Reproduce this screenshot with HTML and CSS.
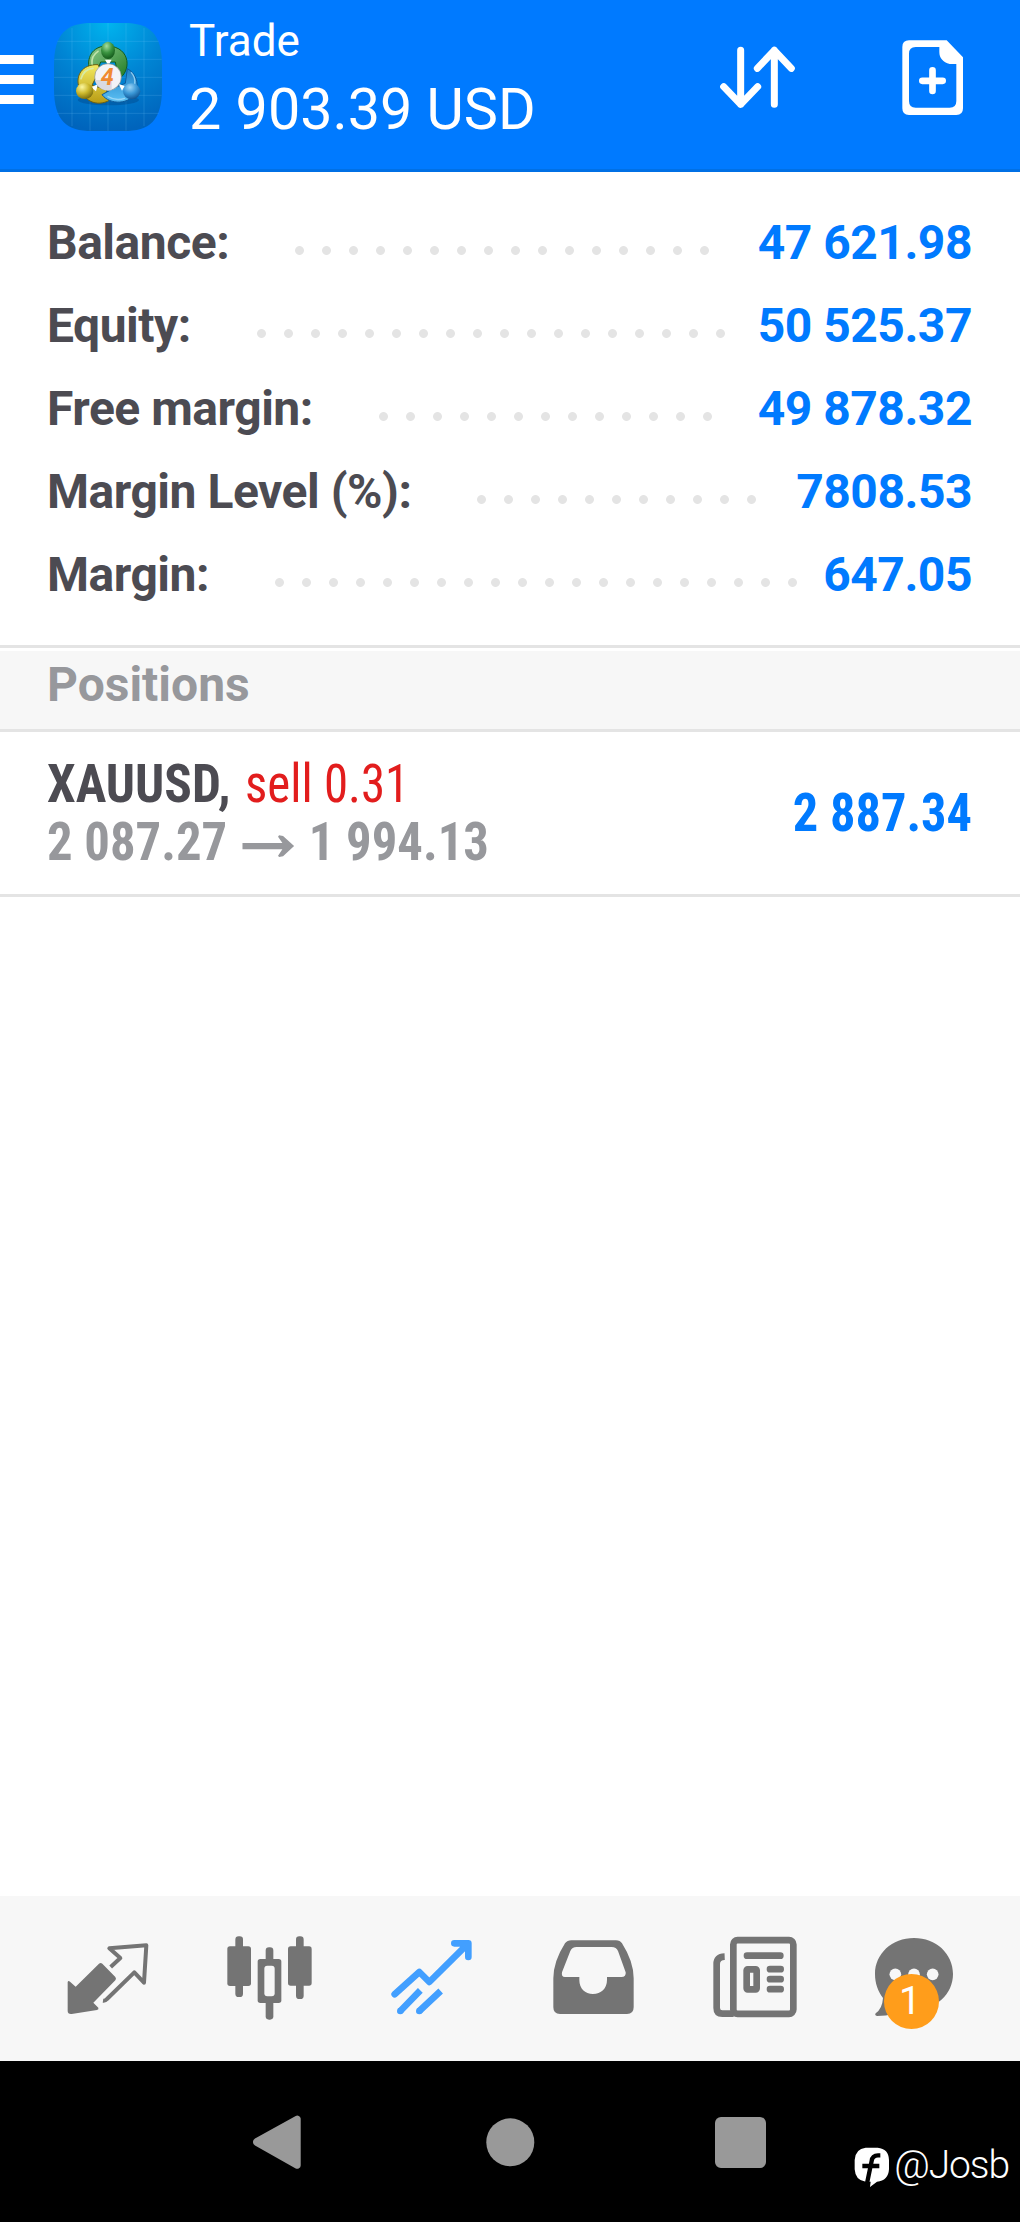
FILE: index.html
```html
<!DOCTYPE html>
<html lang="en">
<head>
<meta charset="utf-8">
<title>Trade</title>
<link rel="stylesheet" href="styles.css">
</head>
<body>
<div class="screen">
  <header class="topbar">
    <svg class="menu" viewBox="0 0 162 516" fill="#fff"><path d="M0 165h101v27H0zM0 225h101v27H0zM0 285h101v27H0z"/></svg>
    <svg class="logo" viewBox="162 69 324 324">
      <defs>
        <radialGradient id="tile" cx=".5" cy="0" r="1"><stop offset="0" stop-color="#00b4ee"/><stop offset=".5" stop-color="#0085d4"/><stop offset="1" stop-color="#0064bc"/></radialGradient>
        <linearGradient id="green" x1="0" y1="0" x2="1" y2="1"><stop offset="0" stop-color="#8ccb8c"/><stop offset="1" stop-color="#1f7a22"/></linearGradient>
        <linearGradient id="yellow" x1="0" y1="0" x2="0" y2="1"><stop offset="0" stop-color="#f3ea62"/><stop offset="1" stop-color="#b99c14"/></linearGradient>
        <linearGradient id="blue" x1="0" y1="0" x2="0" y2="1"><stop offset="0" stop-color="#1f7ec4"/><stop offset="1" stop-color="#5bc0f4"/></linearGradient>
        <radialGradient id="greenBall" cx=".4" cy=".25" r=".8"><stop offset="0" stop-color="#a5dd9f"/><stop offset=".5" stop-color="#3a9440"/><stop offset="1" stop-color="#0f5216"/></radialGradient>
        <radialGradient id="yellowBall" cx=".35" cy=".25" r=".8"><stop offset="0" stop-color="#fbf7a0"/><stop offset=".5" stop-color="#cdb92d"/><stop offset="1" stop-color="#75680c"/></radialGradient>
        <radialGradient id="blueBall" cx=".4" cy=".25" r=".8"><stop offset="0" stop-color="#9bd4f6"/><stop offset=".5" stop-color="#3a97d6"/><stop offset="1" stop-color="#0c4d8c"/></radialGradient>
      </defs>
      <path fill="url(#tile)" d="M162 196C162 100 200 69 276 69h96c76 0 114 31 114 127v70c0 96-38 127-114 127h-96c-76 0-114-31-114-127z"/>
      <path stroke="#7fd0ff" stroke-opacity=".28" stroke-width="2" fill="none" d="M216 84v294M270 70v322M324 69v324M378 70v322M432 84v294M172 124h304M163 178h322M162 232h324M163 286h322M172 340h304"/>
      <ellipse cx="325" cy="300" rx="92" ry="16" fill="#003c7a" opacity=".35"/>
      <path fill="url(#green)" stroke="#155c1a" stroke-width="3" d="M324 138C284 136 258 166 268 208L292 212 302 186H346L356 236C392 218 396 142 324 138z"/>
      <path fill="url(#yellow)" stroke="#6e6010" stroke-width="3" d="M294 194C245 192 226 228 237 262C250 300 288 324 330 300L318 268 276 256 300 206z"/>
      <path fill="url(#blue)" stroke="#0d5a9c" stroke-width="3" d="M382 206C405 218 418 246 408 276C390 314 330 316 306 284L346 262 376 250z"/>
      <path fill="#fff" d="M315 179h20l-7 12h-6zM274 262l20-10-6 22zM356 252l18 6-8 14z"/>
      <path fill="none" stroke="#d5efb9" stroke-width="5" stroke-linecap="round" opacity=".8" d="M276 192q-3-24 18-38M243 236q9-29 36-31"/>
      <path fill="none" stroke="#a7dcf8" stroke-width="4" stroke-linecap="round" opacity=".8" d="M394 218q13 14 10 34M324 290q24 14 50 5"/>
      <ellipse cx="324" cy="151" rx="21" ry="26" fill="url(#greenBall)"/>
      <ellipse cx="254" cy="273" rx="26" ry="24" fill="url(#yellowBall)"/>
      <ellipse cx="395" cy="274" rx="26" ry="24" fill="url(#blueBall)"/>
      <circle cx="324" cy="231" r="40" fill="#f3f3f7" stroke="#8b8f86" stroke-width="2"/>
      <path d="M285 240h50v30a40 40 0 0 1-50-30z" fill="#d9dae2"/>
      <text x="322" y="256" text-anchor="middle" class="logo-digit">4</text>
    </svg>
    <div class="heading">
      <div class="heading-title">Trade</div>
      <div class="heading-total">2 903.39 USD</div>
    </div>
    <svg class="action" viewBox="0 0 510 516" fill="none" stroke="#fff" stroke-width="21" stroke-linecap="round" stroke-linejoin="round"><path d="M182 151v162M131 260l51 53 51-53M283 313V151M232 205l51-54 51 54"/></svg>
    <svg class="action" viewBox="510 0 510 516" fill="#fff"><path fill-rule="evenodd" d="M687 121h113l49 51v153q0 20-20 20H687q-20 0-20-20V141q0-20 20-20zM707 141q-20 0-20 20v142q0 20 20 20h102q20 0 20-20V192h-20c-20-6-31-18-31-36v-15z"/><path d="M757.500 211v62M727 242.500h61" stroke="#fff" stroke-width="20" stroke-linecap="round"/></svg>
  </header>

  <section class="summary">
    <div class="row"><span class="label">Balance:</span><span class="dots" style="width:432px"></span><span class="value">47 621.98</span></div>
    <div class="row"><span class="label">Equity:</span><span class="dots" style="width:486px"></span><span class="value">50 525.37</span></div>
    <div class="row"><span class="label">Free margin:</span><span class="dots" style="width:351px"></span><span class="value">49 878.32</span></div>
    <div class="row"><span class="label">Margin Level (%):</span><span class="dots" style="width:297px"></span><span class="value">7808.53</span></div>
    <div class="row"><span class="label">Margin:</span><span class="dots" style="width:540px"></span><span class="value">647.05</span></div>
  </section>

  <h2 class="section-title">Positions</h2>

  <article class="position">
    <div>
      <div class="line"><span class="symbol">XAUUSD,</span> <span class="side">sell 0.31</span></div>
      <div class="line prices"><span>2 087.27</span><svg class="arrow" viewBox="729 610 156 72" preserveAspectRatio="none" fill="#97989c"><path d="M729 637h120l-13-19 3-4 12 2 33 30-33 31-12 2-3-4 13-19H729z"/></svg><span>1 994.13</span></div>
    </div>
    <div class="profit">2 887.34</div>
  </article>

  <main class="blank"></main>

  <nav class="tabs">
    <svg class="tab" viewBox="0 48 510 495" fill="#747474"><path d="M297 251q5-4 10 0l39 40q4 5 0 10l-66 67 15 15q2 6-4 7l-76 12q-12 1-12-9v-87q2-5 7-1l17 15z"/><path fill="none" stroke="#747474" stroke-width="12" stroke-linejoin="round" d="M332 261l29-27-33-29 111-9-7 112-29-31-82 80q-5 6-12 5"/></svg>
    <svg class="tab" viewBox="510 48 510 495" fill="#747474"><rect x="706" y="169" width="23" height="182" rx="10"/><rect x="682" y="199" width="71" height="119" rx="8"/><rect x="797" y="202" width="23" height="217" rx="10"/><rect x="773" y="237" width="71" height="132" rx="8"/><rect x="793" y="257" width="31" height="92" rx="9" fill="#f7f7f7"/><rect x="888" y="169" width="23" height="188" rx="10"/><rect x="864" y="199" width="71" height="118" rx="8"/></svg>
    <svg class="tab" viewBox="0 48 510 495" fill="none" stroke="#429fff" stroke-width="20" stroke-linejoin="round"><path stroke-linecap="round" d="M164 343l74-67 30 30L384 191M343 190h42v41"/><path d="M181 393l60-62M238 393l64-60"/><g fill="#429fff" stroke="none"><circle cx="181" cy="393" r="10"/><circle cx="238" cy="393" r="10"/></g></svg>
    <svg class="tab" viewBox="510 48 510 495" fill="#747474"><path fill-rule="evenodd" d="M694 181h134q12 0 18 9 35 55 35 105v87q0 20-20 20H660q-20 0-20-20v-87q0-50 35-105 7-9 19-9zM710 201q-14 0-19 12l-25 64q-3 14 9 14h43v9c0 26 17 42 41 42s42-16 42-42v-9h43q15 0 13-14l-23-64q-5-12-19-12z"/></svg>
    <svg class="tab" viewBox="0 48 510 495" fill="none" stroke="#747474" stroke-width="20"><rect x="160" y="180.500" width="180" height="221" rx="13"/><path d="M134 230q-24 1-24 22v132q0 17 17 17h34"/><path stroke-linecap="round" d="M201 227h100M270 267.500h32M270 297.500h32M270 327.500h32"/><rect x="200" y="268" width="30" height="60" rx="3"/></svg>
    <div class="tab chat">
      <svg viewBox="510 48 510 495" fill="#747474"><path d="M702 174c66 0 117 47 117 108s-51 107-117 107q-11 0-26-2-30 20-85 21-8-2-4-8 20-14 22-46c-15-20-24-44-24-72 0-61 51-108 117-108z"/><g fill="#f7f7f7"><circle cx="646" cy="283" r="17.500"/><circle cx="702" cy="283" r="17.500"/><circle cx="758" cy="283" r="17.500"/></g></svg>
      <span class="badge">1</span>
    </div>
  </nav>

  <footer class="system">
    <svg class="keys" viewBox="0 0 1020 161" fill="#999"><path d="M300.700 57.500v47a3.500 3.500 0 0 1-5 3L255 84.500a4 4 0 0 1 0-7l40.700-22.500a3.500 3.500 0 0 1 5 2.500z"/><circle cx="510.300" cy="81.300" r="24"/><rect x="715" y="56" width="51" height="51" rx="6"/></svg>
    <div class="tag">
      <svg class="tag-icon" viewBox="526 292 108 120"><path fill="#fff" d="M561 294h36q33 3 34 37v28q-2 34-36 37l-21 16 2-16h-15q-31-3-33-37v-28q2-34 33-37z"/><path fill="none" stroke="#000" stroke-width="13" d="M605 317h-7q-17 0-19 17l-14 67M551 349h51"/></svg>
      <span>@Josb</span>
    </div>
  </footer>
</div>
</body>
</html>
```
FILE: styles.css
```css
* { box-sizing: border-box; }
body { margin: 0; background: #fff; font-family: Roboto, "Liberation Sans", sans-serif; }
.screen { display: flex; flex-direction: column; width: 1020px; height: 2222px; overflow: hidden; }
svg { display: block; flex: none; }

.topbar { display: flex; align-items: flex-start; height: 172px; background: #007aff; border-bottom: 3px solid #0070e5; color: #fff; }
.menu { width: 54px; height: 172px; }
.logo { width: 108px; height: 108px; margin-top: 23px; }
.logo-digit { font: italic 700 70px Roboto, sans-serif; fill: #f08a32; }
.heading { flex: 1; padding: 11px 0 0 27px; white-space: nowrap; }
.heading-title { font-size: 44px; line-height: 60px; }
.heading-total { font-size: 57.5px; line-height: 78px; }
.action { width: 170px; height: 172px; }

.summary { height: 473px; padding: 29px 48px 0 47px; }
.row { display: flex; align-items: center; height: 83px; font-size: 48px; font-weight: 700; line-height: 83px; letter-spacing: -.48px; white-space: nowrap; }
.label { color: #4c4b52; }
.dots { height: 27px; margin: 16px 0 0 57px; background: radial-gradient(circle at center, #e4e4e4 4px, transparent 4.800px) 0 0 / 27px 27px; }
.value { margin-left: auto; color: #007aff; }

.section-title { height: 87px; margin: 0; padding-left: 47px; border-top: 3px solid #e4e4e4; border-bottom: 3px solid #e4e4e4; box-shadow: inset 0 3px #fff; background: #f7f7f7; color: #97989c; font-size: 48px; font-weight: 700; line-height: 73px; }

/* Condensed face, narrowed a little further for the position row */
.position { display: flex; justify-content: space-between; align-items: center; height: 165px; padding: 0 48px 0 47px; border-bottom: 3px solid #e4e4e4; font-family: "Roboto Condensed", Roboto, sans-serif; font-stretch: 75%; font-size: 53.5px; font-weight: 700; white-space: nowrap; }
.line { display: flex; align-items: center; gap: 6px; height: 58px; line-height: 58px; transform-origin: left; }
.symbol { color: #4c4b52; transform: scaleX(.958); transform-origin: left; }
.side { color: #e21d1d; font-weight: 400; transform: scaleX(.914); transform-origin: left; }
.prices { gap: 15.5px; color: #97989c; transform: scaleX(.948); }
.arrow { width: 55px; height: 24px; margin-top: 8px; }
.profit { margin-bottom: 2px; color: #007aff; transform: scaleX(.943); transform-origin: right; }

.blank { flex: 1; }

.tabs { display: flex; height: 165px; background: #f7f7f7; }
.tab { width: 170px; height: 165px; }
.chat { position: relative; }
.badge { position: absolute; left: 33.500px; top: 77.500px; width: 55px; height: 55px; padding-right: 2px; border-radius: 50%; background: #ff9d1b; color: #fff; font-size: 39px; line-height: 55px; text-align: center; }

.system { position: relative; height: 161px; background: #000; }
.keys { width: 1020px; height: 161px; }
.tag { position: absolute; right: 11px; bottom: 33px; display: flex; align-items: center; gap: 4px; color: #fff; font-size: 39px; font-weight: 350; line-height: 48px; letter-spacing: -1.1px; }
.tag-icon { width: 36px; height: 40px; margin-top: 4px; }
```
